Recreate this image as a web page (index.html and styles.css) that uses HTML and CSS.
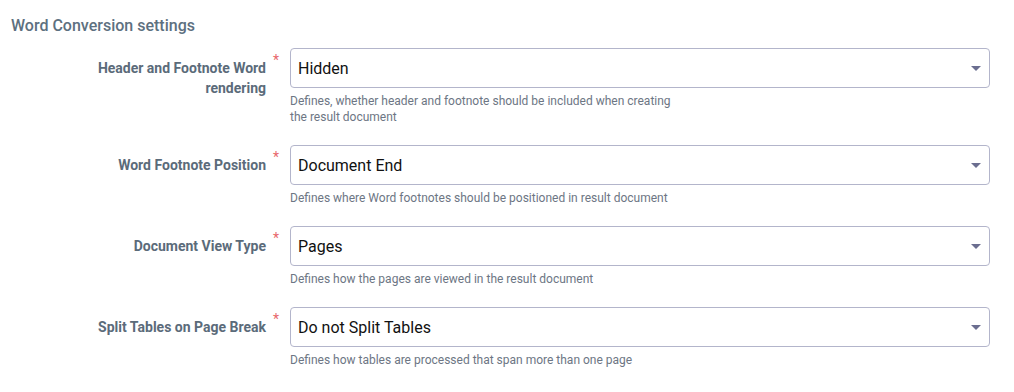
FILE: index.html
```html
<!DOCTYPE html>
<html lang="en">
<head>
    <meta charset="UTF-8">
    <meta name="viewport" content="width=device-width, initial-scale=1.0">
    <title>Word Conversion settings</title>
    <link rel="stylesheet" href="styles.css">
</head>
<body>
    <div class="settings">
        <h2 class="section-title">Word Conversion settings</h2>

        <div class="field-row">
            <label class="field-label">Header and Footnote Word rendering</label>
            <span class="required">*</span>
            <div class="field">
                <div class="select-box">
                    <span class="select-value">Hidden</span>
                    <svg class="caret" width="10" height="5" viewBox="0 0 10 5"><polygon points="0,0 10,0 5,5"/></svg>
                </div>
                <p class="help-text">Defines, whether header and footnote should be included when creating<br>the result document</p>
            </div>
        </div>

        <div class="field-row">
            <label class="field-label">Word Footnote Position</label>
            <span class="required">*</span>
            <div class="field">
                <div class="select-box">
                    <span class="select-value">Document End</span>
                    <svg class="caret" width="10" height="5" viewBox="0 0 10 5"><polygon points="0,0 10,0 5,5"/></svg>
                </div>
                <p class="help-text">Defines where Word footnotes should be positioned in result document</p>
            </div>
        </div>

        <div class="field-row">
            <label class="field-label">Document View Type</label>
            <span class="required">*</span>
            <div class="field">
                <div class="select-box">
                    <span class="select-value">Pages</span>
                    <svg class="caret" width="10" height="5" viewBox="0 0 10 5"><polygon points="0,0 10,0 5,5"/></svg>
                </div>
                <p class="help-text">Defines how the pages are viewed in the result document</p>
            </div>
        </div>

        <div class="field-row">
            <label class="field-label">Split Tables on Page Break</label>
            <span class="required">*</span>
            <div class="field">
                <div class="select-box">
                    <span class="select-value">Do not Split Tables</span>
                    <svg class="caret" width="10" height="5" viewBox="0 0 10 5"><polygon points="0,0 10,0 5,5"/></svg>
                </div>
                <p class="help-text">Defines how tables are processed that span more than one page</p>
            </div>
        </div>
    </div>
</body>
</html>
```

FILE: styles.css
```css
body {
    margin: 0;
    font-family: Roboto, "Liberation Sans", Arial, sans-serif;
    background: #fff;
}

.settings {
    padding: 16px 24px 0 11px;
}

.section-title {
    margin: 0 0 12px 0;
    font-size: 16px;
    line-height: 20px;
    font-weight: 500;
    color: #5d7080;
}

.field-row {
    display: grid;
    grid-template-columns: 255px 24px 1fr;
    margin-bottom: 20px;
}

.field-label {
    justify-self: end;
    max-width: 185px;
    padding-top: 10px;
    text-align: right;
    font-size: 14px;
    line-height: 20px;
    font-weight: 700;
    color: #5b6b7a;
}

.required {
    padding: 5px 0 0 7px;
    font-size: 14px;
    line-height: 14px;
    color: #e8676b;
}

.select-box {
    height: 40px;
    box-sizing: border-box;
    border: 1px solid #b3b5cb;
    border-radius: 4px;
    display: flex;
    align-items: center;
    justify-content: space-between;
    padding: 0 8px 0 7px;
}

.select-value {
    font-size: 16px;
    color: #111;
}

.caret {
    fill: #6b6e90;
}

.help-text {
    margin: 5px 0 0 0;
    font-size: 12px;
    line-height: 16px;
    color: #6d7684;
}
```
